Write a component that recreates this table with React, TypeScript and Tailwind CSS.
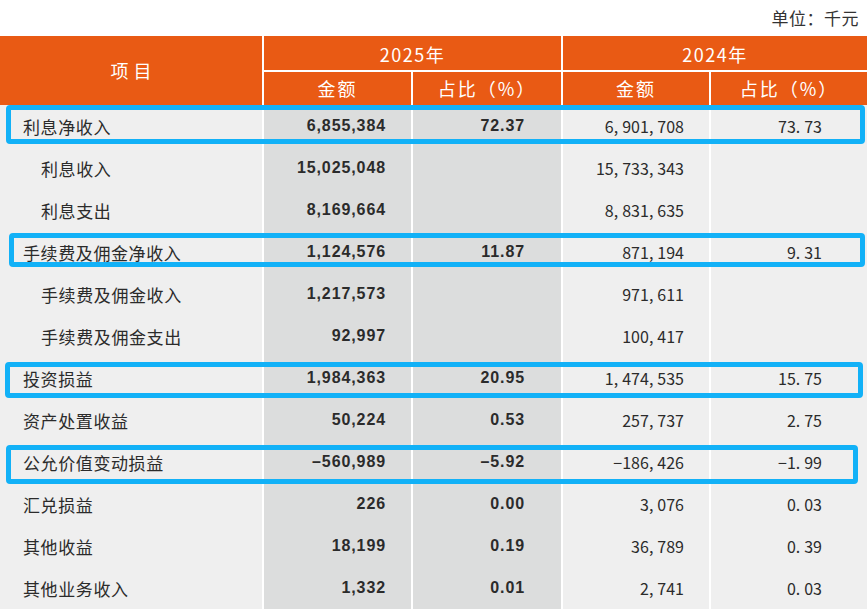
import React from 'react'

interface Row {
  label: string
  indent?: boolean
  amount2025: string
  ratio2025?: string
  amount2024: string
  ratio2024?: string
}

const ROWS: Row[] = [
  { label: '利息净收入', amount2025: '6,855,384', ratio2025: '72.37', amount2024: '6,901,708', ratio2024: '73.73' },
  { label: '利息收入', indent: true, amount2025: '15,025,048', amount2024: '15,733,343' },
  { label: '利息支出', indent: true, amount2025: '8,169,664', amount2024: '8,831,635' },
  { label: '手续费及佣金净收入', amount2025: '1,124,576', ratio2025: '11.87', amount2024: '871,194', ratio2024: '9.31' },
  { label: '手续费及佣金收入', indent: true, amount2025: '1,217,573', amount2024: '971,611' },
  { label: '手续费及佣金支出', indent: true, amount2025: '92,997', amount2024: '100,417' },
  { label: '投资损益', amount2025: '1,984,363', ratio2025: '20.95', amount2024: '1,474,535', ratio2024: '15.75' },
  { label: '资产处置收益', amount2025: '50,224', ratio2025: '0.53', amount2024: '257,737', ratio2024: '2.75' },
  { label: '公允价值变动损益', amount2025: '–560,989', ratio2025: '–5.92', amount2024: '−186,426', ratio2024: '−1.99' },
  { label: '汇兑损益', amount2025: '226', ratio2025: '0.00', amount2024: '3,076', ratio2024: '0.03' },
  { label: '其他收益', amount2025: '18,199', ratio2025: '0.19', amount2024: '36,789', ratio2024: '0.39' },
  { label: '其他业务收入', amount2025: '1,332', ratio2025: '0.01', amount2024: '2,741', ratio2024: '0.03' },
]

const cjk = { fontFamily: '"Noto Sans CJK SC", "Noto Sans", sans-serif' }
const latin = { fontFamily: '"Liberation Sans", Arial, sans-serif' }

function Spaced({ value }: { value: string }) {
  return (
    <>
      {value.split('').map((ch, i) =>
        ch === ',' || ch === '.' ? (
          <span key={i} className="mr-[4px]">{ch}</span>
        ) : (
          <span key={i}>{ch}</span>
        )
      )}
    </>
  )
}

const COLS = 'grid grid-cols-[262px_147px_148px_146px_156px] gap-x-[2px]'

export default function App() {
  return (
    <div className="relative w-[867px] h-[609px] overflow-hidden bg-white text-[#2b2b2b]" style={cjk}>
      <div className="h-[36px] flex items-center justify-end pr-[8px] text-[17px] tracking-[0.5px] text-[#333]">
        单位：千元
      </div>

      <div className={`${COLS} grid-rows-[34px_33px] gap-y-[2px] bg-white text-white text-[18px]`}>
        <div className="row-span-2 bg-[#e95a14] flex items-center justify-center tracking-[5px] pl-[5px]">项目</div>
        <div className="col-span-2 bg-[#e95a14] flex items-center justify-center tracking-[1.5px] pt-[2px]">2025年</div>
        <div className="col-span-2 bg-[#e95a14] flex items-center justify-center tracking-[1.5px] pt-[2px]">2024年</div>
        <div className="bg-[#e95a14] flex items-center justify-center tracking-[2px]">金额</div>
        <div className="bg-[#e95a14] flex items-center justify-center tracking-[2px]">占比（%）</div>
        <div className="bg-[#e95a14] flex items-center justify-center tracking-[2px]">金额</div>
        <div className="bg-[#e95a14] flex items-center justify-center tracking-[2px]">占比（%）</div>
      </div>

      <div className="relative">
        {ROWS.map((row) => (
          <div key={row.label} className={`${COLS} h-[42px] bg-white`}>
            <div className={`bg-[#efefef] flex items-center pt-[2px] text-[17px] tracking-[0.6px] ${row.indent ? 'pl-[41px]' : 'pl-[23px]'}`}>
              {row.label}
            </div>
            <div className="bg-[#dcdddd] flex items-center justify-end pr-[25px] text-[16px] font-bold tracking-[0.9px]" style={latin}>
              {row.amount2025}
            </div>
            <div className="bg-[#dcdddd] flex items-center justify-end pr-[36px] text-[16px] font-bold tracking-[0.9px]" style={latin}>
              {row.ratio2025}
            </div>
            <div className="bg-[#efefef] flex items-center justify-end pr-[25px] text-[16px]">
              <Spaced value={row.amount2024} />
            </div>
            <div className="bg-[#efefef] flex items-center justify-end pr-[45px] text-[16px]">
              {row.ratio2024 && <Spaced value={row.ratio2024} />}
            </div>
          </div>
        ))}

        {/* highlight frames drawn over the table */}
        <div className="absolute top-[0px] left-[6px] w-[859px] h-[39px] border-[5px] border-[#12b1f7] rounded-[4px]" />
        <div className="absolute top-[128px] left-[9px] w-[856px] h-[34px] border-[5px] border-[#12b1f7] rounded-[4px]" />
        <div className="absolute top-[257px] left-[5px] w-[858px] h-[36px] border-[5px] border-[#12b1f7] rounded-[4px]" />
        <div className="absolute top-[340px] left-[6px] w-[852px] h-[39px] border-[5px] border-[#12b1f7] rounded-[4px]" />
      </div>
    </div>
  )
}
